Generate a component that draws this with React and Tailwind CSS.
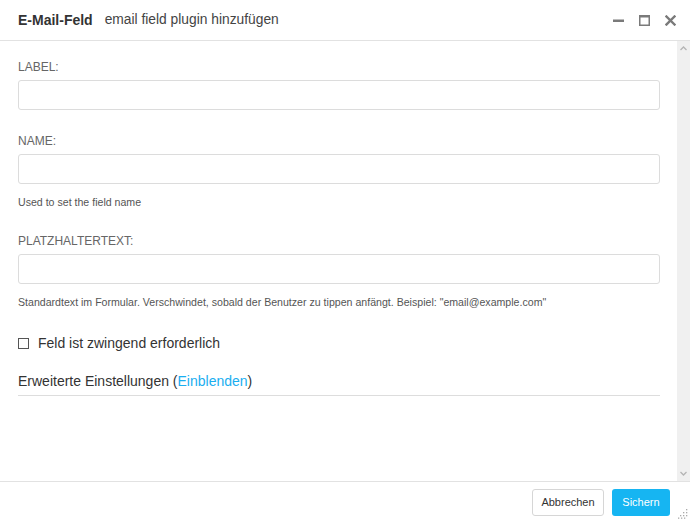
const font = "font-['Liberation_Sans',Arial,sans-serif]";

const Field = ({ label, help, className }) => (
  <div className={className}>
    <div className="text-[12px] leading-[16px] text-[#666] uppercase">{label}</div>
    <div className="mt-[5px] h-[30px] w-full rounded-[3px] border border-[#dcdcdc] bg-white" />
    {help && (
      <div className="mt-[11px] text-[10.6px] leading-[14px] text-[#555]">{help}</div>
    )}
  </div>
);

const App = () => {
  return (
    <div className={`${font} flex h-[522px] w-[690px] flex-col bg-white text-[#333]`}>
      <div className="flex h-[41px] shrink-0 items-center border-b border-[#e2e2e2] pl-[18px] pr-[14px]">
        <span className="text-[14px] font-bold text-[#333]">E-Mail-Feld</span>
        <span className="ml-[12px] text-[13.8px] text-[#444]">email field plugin hinzufügen</span>
        <div className="ml-auto flex items-center gap-[15px] text-[#7a7a7a]">
          <svg width="11" height="11" viewBox="0 0 11 11">
            <rect x="0" y="4.5" width="11" height="2.5" fill="currentColor" />
          </svg>
          <svg width="11" height="11" viewBox="0 0 11 11">
            <rect x="0.75" y="0.75" width="9.5" height="9.5" fill="none" stroke="currentColor" strokeWidth="1.5" />
            <rect x="0" y="0" width="11" height="2.5" fill="currentColor" />
          </svg>
          <svg width="11" height="11" viewBox="0 0 11 11">
            <path d="M1.5 1.5 L9.5 9.5 M9.5 1.5 L1.5 9.5" stroke="currentColor" strokeWidth="2.4" strokeLinecap="square" />
          </svg>
        </div>
      </div>

      <div className="flex min-h-0 flex-1">
        <div className="flex-1 pl-[18px] pr-[17px] pt-[18px]">
          <Field label="Label:" />
          <Field className="mt-[23px]" label="Name:" help="Used to set the field name" />
          <Field
            className="mt-[24px]"
            label="Platzhaltertext:"
            help='Standardtext im Formular. Verschwindet, sobald der Benutzer zu tippen anfängt. Beispiel: "email@example.com"'
          />
          <label className="mt-[25px] flex items-center text-[14px] leading-[18px] text-[#333]">
            <span className="mr-[9px] h-[11px] w-[11px] border border-[#555] bg-white" />
            Feld ist zwingend erforderlich
          </label>
          <div className="mt-[20px] border-b border-[#ddd] pb-[5px] text-[14px] leading-[18px] text-[#333]">
            Erweiterte Einstellungen (<span className="text-[#1aaef0]">Einblenden</span>)
          </div>
        </div>
        <div className="flex w-[13px] flex-col items-center justify-between bg-[#f0f0f0] py-[5px]">
          <svg width="7" height="5" viewBox="0 0 7 5">
            <path d="M0.5 4 L3.5 1 L6.5 4" fill="none" stroke="#b5b5b5" strokeWidth="1.3" />
          </svg>
          <svg width="7" height="5" viewBox="0 0 7 5">
            <path d="M0.5 1 L3.5 4 L6.5 1" fill="none" stroke="#b5b5b5" strokeWidth="1.3" />
          </svg>
        </div>
      </div>

      <div className="relative flex h-[41px] shrink-0 items-center justify-end gap-[8px] border-t border-[#e2e2e2] pr-[20px]">
        <button
          type="button"
          className="h-[27px] w-[72px] rounded-[3px] border border-[#d6d6d6] bg-white text-[11px] text-[#333]"
        >
          Abbrechen
        </button>
        <button
          type="button"
          className="h-[27px] w-[58px] rounded-[3px] bg-[#16b5f2] text-[11px] text-white"
        >
          Sichern
        </button>
        <svg className="absolute bottom-[3px] right-[2px]" width="10" height="10" viewBox="0 0 10 10">
          <g fill="#aaa">
            <rect x="8" y="0" width="1.3" height="1.3" />
            <rect x="5" y="3" width="1.3" height="1.3" />
            <rect x="8" y="3" width="1.3" height="1.3" />
            <rect x="2" y="6" width="1.3" height="1.3" />
            <rect x="5" y="6" width="1.3" height="1.3" />
            <rect x="8" y="6" width="1.3" height="1.3" />
            <rect x="0" y="8.5" width="1.3" height="1.3" />
            <rect x="3" y="8.5" width="1.3" height="1.3" />
            <rect x="6" y="8.5" width="1.3" height="1.3" />
          </g>
        </svg>
      </div>
    </div>
  );
};

export default App;
